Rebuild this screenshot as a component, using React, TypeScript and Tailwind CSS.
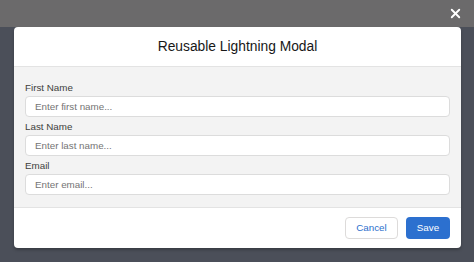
import { X } from 'lucide-react';

const fields = [
  { id: 'first', label: 'First Name', placeholder: 'Enter first name...' },
  { id: 'last', label: 'Last Name', placeholder: 'Enter last name...' },
  { id: 'email', label: 'Email', placeholder: 'Enter email...' },
];

export default function App() {
  return (
    <div
      className="h-[262px] w-full bg-[#4b4f59] flex flex-col overflow-hidden"
      style={{ fontFamily: '"Liberation Sans", Arial, sans-serif' }}
    >
      {/* backdrop strip with close */}
      <div className="h-[27px] shrink-0 bg-[#6b6a6b] flex items-center justify-end pr-[11px]">
        <X className="w-[15px] h-[15px] text-white" strokeWidth={3} />
      </div>

      {/* Modal */}
      <div className="ml-[14px] mr-[13px] rounded-[4px] bg-white shadow-[0_2px_3px_rgba(0,0,0,0.25)] overflow-hidden">
        <div className="h-[40px] flex items-center justify-center border-b border-[#e3e3e3]">
          <h2 className="text-[13.8px] text-[#181818] leading-none">Reusable Lightning Modal</h2>
        </div>

        <div className="bg-[#f3f3f3] px-[11px] pt-[14px] pb-[12px] flex flex-col gap-[3px]">
          {fields.map((f) => (
            <div key={f.id} className="flex flex-col gap-[1px]">
              <label className="h-[14px] flex items-center text-[9.8px] text-[#3e3e3c]">{f.label}</label>
              <input
                placeholder={f.placeholder}
                className="h-[21px] w-full rounded-[4px] border border-[#dcdcdc] bg-white px-[9px] text-[9.8px] text-[#181818] placeholder:text-[#747474] outline-none"
              />
            </div>
          ))}
        </div>

        <div className="h-[41px] border-t border-[#e3e3e3] flex items-center justify-end gap-[8px] pr-[11px]">
          <button className="h-[22px] w-[53px] rounded-[4px] border border-[#dddbda] bg-white text-[9.8px] text-[#2c6fcc]">
            Cancel
          </button>
          <button className="h-[22px] w-[44px] rounded-[4px] bg-[#2c70cf] text-[9.8px] text-white">
            Save
          </button>
        </div>
      </div>
    </div>
  );
}
